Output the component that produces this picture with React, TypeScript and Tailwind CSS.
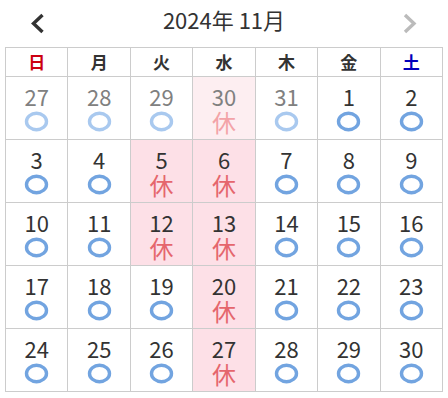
import React from "react";

type Day = { n: number; other?: boolean; closed?: boolean };

const weekdays = [
  { label: "日", cls: "text-[#cc0011]" },
  { label: "月", cls: "text-[#333333]" },
  { label: "火", cls: "text-[#333333]" },
  { label: "水", cls: "text-[#333333]" },
  { label: "木", cls: "text-[#333333]" },
  { label: "金", cls: "text-[#333333]" },
  { label: "土", cls: "text-[#0000bb]" },
];

const closedDays = new Set([5, 6, 12, 13, 20, 27]);

const days: Day[] = [
  { n: 27, other: true },
  { n: 28, other: true },
  { n: 29, other: true },
  { n: 30, other: true, closed: true },
  { n: 31, other: true },
  ...Array.from({ length: 30 }, (_, i) => ({ n: i + 1, closed: closedDays.has(i + 1) })),
];

function Ring({ faded }: { faded?: boolean }) {
  return (
    <svg width="25" height="21" viewBox="0 0 25 21" className="block">
      <ellipse
        cx="12.5"
        cy="10.5"
        rx="10"
        ry="8.2"
        fill="none"
        stroke={faded ? "#a9c9ef" : "#72a4e0"}
        strokeWidth="3.4"
      />
    </svg>
  );
}

function Chevron({ dir, color }: { dir: "left" | "right"; color: string }) {
  const d = dir === "left" ? "M11.5 2 L2.5 10.5 L11.5 19" : "M2 2 L11 10.5 L2 19";
  return (
    <svg width="14" height="21" viewBox="0 0 14 21" className="block">
      <path d={d} fill="none" stroke={color} strokeWidth="3.4" strokeLinecap="butt" />
    </svg>
  );
}

export default function App() {
  return (
    <div
      className="w-[448px] h-[398px] bg-white text-[#333333]"
      style={{ fontFamily: '"Noto Sans CJK JP", "Noto Sans", sans-serif' }}
    >
      <div className="h-[47px] flex items-start justify-between px-[31px]">
        <div className="mt-[13px]">
          <Chevron dir="left" color="#333333" />
        </div>
        <div className="mt-[5px] text-[22px] leading-[28px] text-[#333333]">2024年 11月</div>
        <div className="mt-[13px]">
          <Chevron dir="right" color="#bbbbbb" />
        </div>
      </div>
      <div className="mx-[5px] w-[438px] grid grid-cols-7 border-l border-t border-[#cccccc]">
        {weekdays.map((w) => (
          <div
            key={w.label}
            className={`h-[29px] border-r border-b border-[#cccccc] flex items-center justify-center text-[17px] leading-[20px] font-bold ${w.cls}`}
          >
            {w.label}
          </div>
        ))}
        {days.map((d, i) => {
          const bg = d.closed ? (d.other ? "bg-[#fdeef1]" : "bg-[#fde0e7]") : "bg-white";
          return (
            <div
              key={i}
              className={`h-[63px] border-r border-b border-[#cccccc] flex flex-col items-center ${bg}`}
            >
              <div
                className={`mt-[8px] h-[22px] text-[22px] leading-[22px] ${
                  d.other ? "text-[#808080]" : "text-[#333333]"
                }`}
              >
                {d.n}
              </div>
              <div className="mt-[2px] h-[25px] flex items-center justify-center">
                {d.closed ? (
                  <span
                    className={`block h-[24px] text-[24px] leading-[24px] ${
                      d.other ? "text-[#f3a3a8]" : "text-[#e5666d]"
                    }`}
                  >
                    休
                  </span>
                ) : (
                  <Ring faded={d.other} />
                )}
              </div>
            </div>
          );
        })}
      </div>
    </div>
  );
}
